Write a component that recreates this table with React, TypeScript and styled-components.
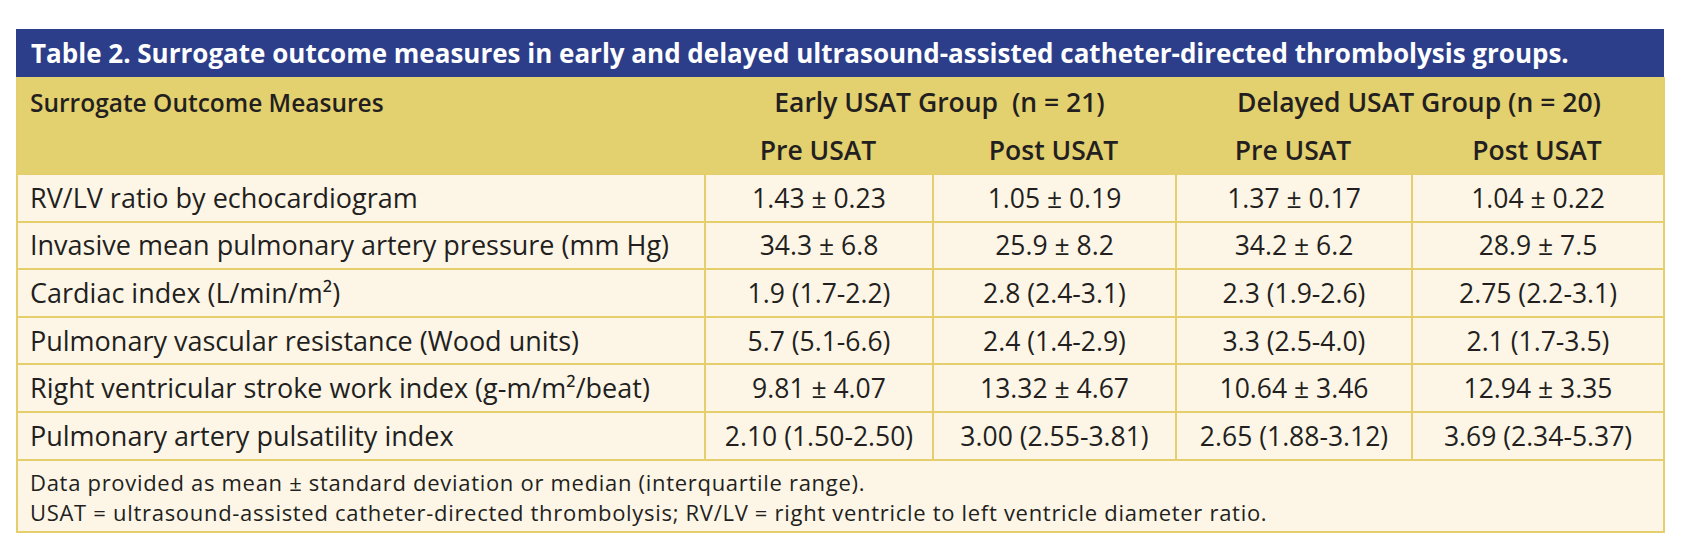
import React from "react";
import styled, { createGlobalStyle } from "styled-components";

const GlobalStyle = createGlobalStyle`
  html, body { margin: 0; padding: 0; background: #ffffff; }
  body {
    font-family: "Open Sans", "Noto Sans", sans-serif;
    color: #231f20;
  }
`;

const BLUE = "#2c3e8a";
const GOLD = "#e3d06e";
const LINE = "#e4cf6c";
const CREAM = "#fdf6e7";

const Page = styled.div`
  padding: 29px 0 0 16px;
`;

const Figure = styled.figure`
  margin: 0;
  width: 1649px;
`;

const Title = styled.div`
  box-sizing: border-box;
  width: 1648px;
  height: 48px;
  display: flex;
  align-items: center;
  padding-left: 15px;
  background: ${BLUE};
  color: #ffffff;
  font-size: 26px;
  font-weight: 700;
  white-space: nowrap;
`;

const Table = styled.table`
  width: 1649px;
  table-layout: fixed;
  border-collapse: separate;
  border-spacing: 0;
  border-left: 2px solid ${LINE};
  border-right: 2px solid ${LINE};
  border-bottom: 2px solid ${LINE};
  background: ${CREAM};
`;

const HeadRow = styled.tr<{ $h: number }>`
  height: ${(p) => p.$h}px;
`;

const HeadCell = styled.th<{ $align?: "left" | "center" }>`
  background: ${GOLD};
  padding: 0 8px;
  font-size: 26.5px;
  font-weight: 600;
  line-height: 28px;
  text-align: ${(p) => p.$align ?? "center"};
  vertical-align: middle;
  white-space: nowrap;
`;

const LabelHead = styled(HeadCell)`
  vertical-align: top;
  padding: 12px 12px 0;
  font-size: 24.5px;
`;

const BodyRow = styled.tr`
  height: 47.6px;
`;

const Cell = styled.td<{ $first?: boolean }>`
  padding: 0 ${(p) => (p.$first ? "12px" : "4px")};
  border-top: 2px solid ${LINE};
  border-left: ${(p) => (p.$first ? "none" : `2px solid ${LINE}`)};
  font-size: ${(p) => (p.$first ? "27px" : "26.5px")};
  font-weight: 400;
  line-height: 28px;
  text-align: ${(p) => (p.$first ? "left" : "center")};
  vertical-align: middle;
  white-space: nowrap;
`;

const NoteCell = styled.td`
  padding: 6px 12px 4px;
  border-top: 2px solid ${LINE};
  text-align: left;
`;

const NoteLine = styled.div`
  font-size: 22px;
  line-height: 30px;
  letter-spacing: 0.7px;
  white-space: nowrap;
`;

type Row = { label: React.ReactNode; values: string[] };

const rows: Row[] = [
  { label: "RV/LV ratio by echocardiogram", values: ["1.43 ± 0.23", "1.05 ± 0.19", "1.37 ± 0.17", "1.04 ± 0.22"] },
  { label: "Invasive mean pulmonary artery pressure (mm Hg)", values: ["34.3 ± 6.8", "25.9 ± 8.2", "34.2 ± 6.2", "28.9 ± 7.5"] },
  { label: "Cardiac index (L/min/m²)", values: ["1.9 (1.7-2.2)", "2.8 (2.4-3.1)", "2.3 (1.9-2.6)", "2.75 (2.2-3.1)"] },
  { label: "Pulmonary vascular resistance (Wood units)", values: ["5.7 (5.1-6.6)", "2.4 (1.4-2.9)", "3.3 (2.5-4.0)", "2.1 (1.7-3.5)"] },
  { label: "Right ventricular stroke work index (g-m/m²/beat)", values: ["9.81 ± 4.07", "13.32 ± 4.67", "10.64 ± 3.46", "12.94 ± 3.35"] },
  { label: "Pulmonary artery pulsatility index", values: ["2.10 (1.50-2.50)", "3.00 (2.55-3.81)", "2.65 (1.88-3.12)", "3.69 (2.34-5.37)"] },
];

const colWidths = [686, 228, 243, 236, 252];

export default function App() {
  return (
    <>
      <GlobalStyle />
      <Page>
        <Figure>
          <Title>
            Table 2. Surrogate outcome measures in early and delayed ultrasound-assisted catheter-directed thrombolysis groups.
          </Title>
          <Table>
            <colgroup>
              {colWidths.map((w, i) => (
                <col key={i} style={{ width: w }} />
              ))}
            </colgroup>
            <thead>
              <HeadRow $h={49}>
                <LabelHead $align="left" rowSpan={2}>
                  Surrogate Outcome Measures
                </LabelHead>
                <HeadCell colSpan={2}>Early USAT Group&nbsp; (n = 21)</HeadCell>
                <HeadCell colSpan={2}>Delayed USAT Group (n = 20)</HeadCell>
              </HeadRow>
              <HeadRow $h={47}>
                <HeadCell>Pre USAT</HeadCell>
                <HeadCell>Post USAT</HeadCell>
                <HeadCell>Pre USAT</HeadCell>
                <HeadCell>Post USAT</HeadCell>
              </HeadRow>
            </thead>
            <tbody>
              {rows.map((r, i) => (
                <BodyRow key={i}>
                  <Cell $first>{r.label}</Cell>
                  {r.values.map((v, j) => (
                    <Cell key={j}>{v}</Cell>
                  ))}
                </BodyRow>
              ))}
              <tr>
                <NoteCell colSpan={5}>
                  <NoteLine>Data provided as mean ± standard deviation or median (interquartile range).</NoteLine>
                  <NoteLine>USAT = ultrasound-assisted catheter-directed thrombolysis; RV/LV = right ventricle to left ventricle diameter ratio.</NoteLine>
                </NoteCell>
              </tr>
            </tbody>
          </Table>
        </Figure>
      </Page>
    </>
  );
}
